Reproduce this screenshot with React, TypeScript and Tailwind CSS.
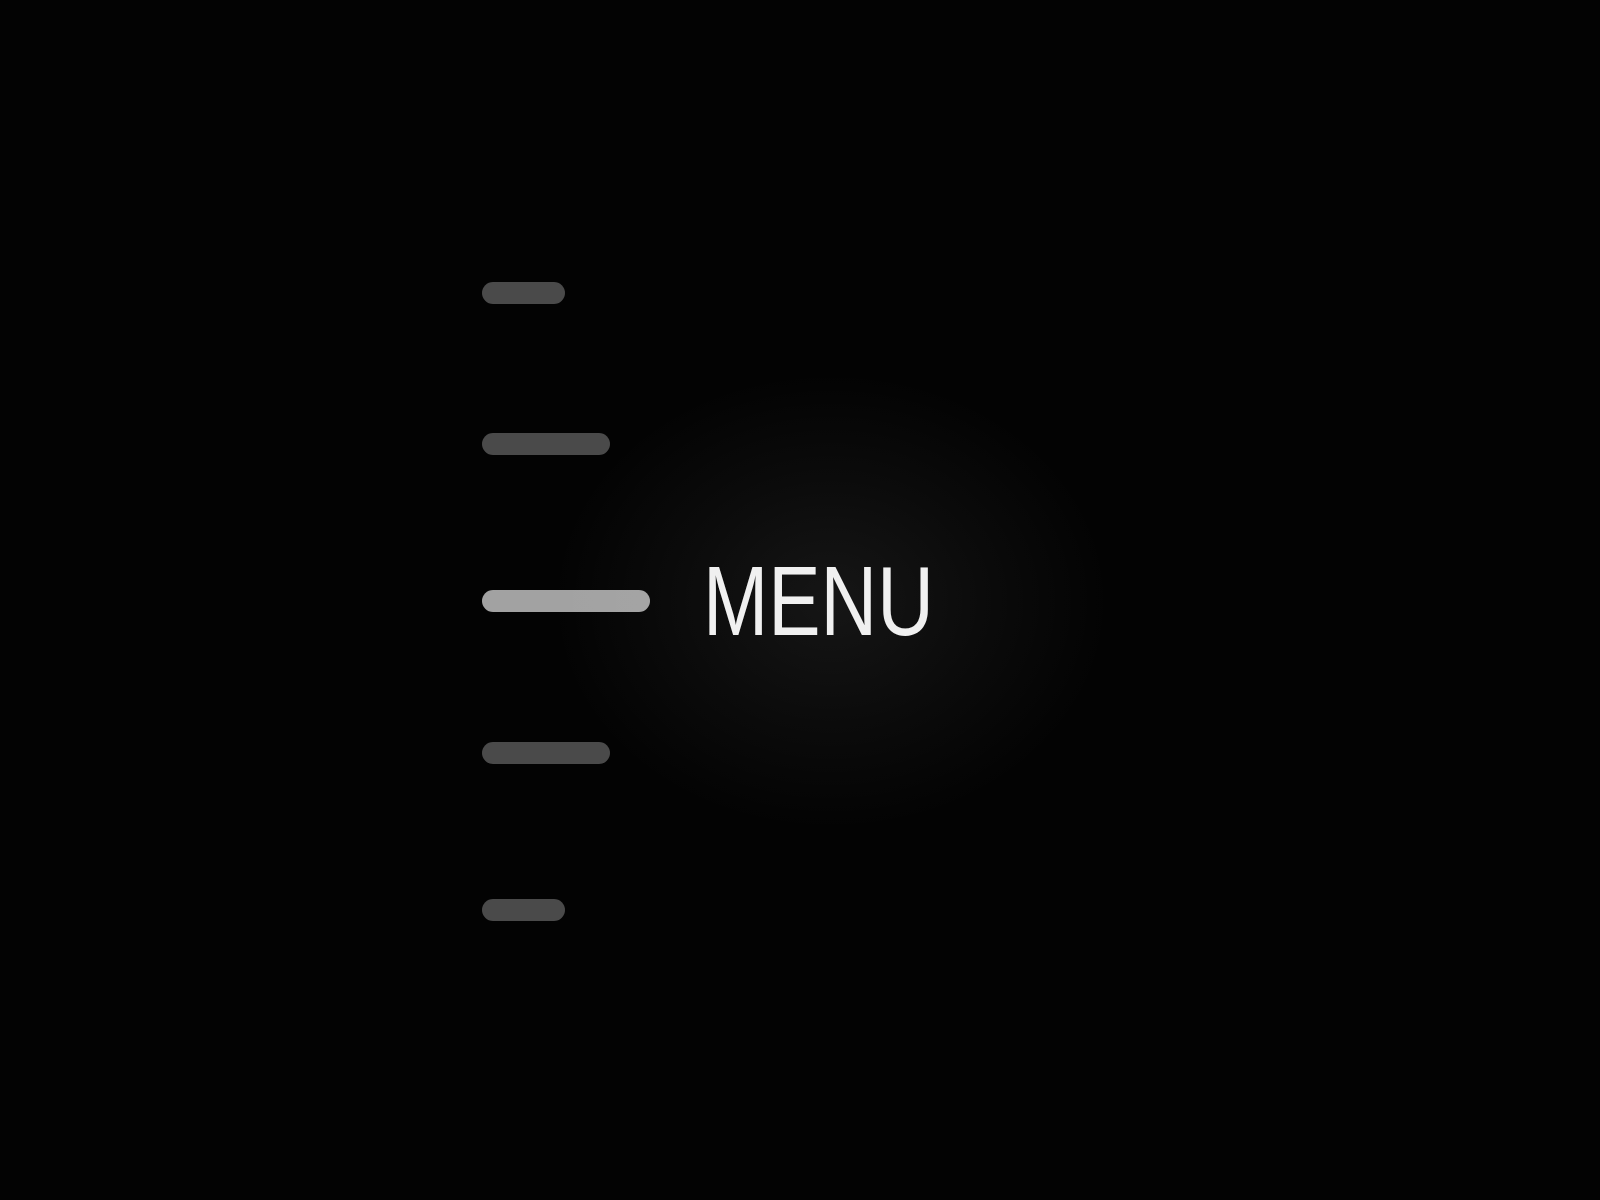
import React from "react";

function Bar({ w, active }: { w: string; active?: boolean }) {
  return (
    <div
      className={`${w} h-[22px] rounded-full ${active ? "bg-[#a2a2a2]" : "bg-[#4a4a4a]"}`}
    />
  );
}

export default function App() {
  return (
    <div className="w-full h-[1200px] bg-[#030303] overflow-hidden relative">
      <nav className="flex flex-col pl-[482px] pt-[282px]">
        <Bar w="w-[83px]" />
        <div className="mt-[129px]">
          <Bar w="w-[128px]" />
        </div>
        <div className="mt-[135px] h-[22px] flex items-center">
          <Bar w="w-[168px]" active />
          <div className="relative ml-[53px] h-[22px] flex items-center">
            <div className="absolute left-[128px] top-[11px] w-[560px] h-[460px] -translate-x-1/2 -translate-y-1/2 bg-[radial-gradient(closest-side,rgba(255,255,255,0.075),rgba(255,255,255,0.03)_55%,transparent)] pointer-events-none" />
            <span
              className="relative block text-[98px] leading-none text-[#f0f0f0] origin-left scale-x-[0.8] whitespace-nowrap"
              style={{ fontFamily: '"Liberation Sans", Arial, sans-serif' }}
            >
              MENU
            </span>
          </div>
        </div>
        <div className="mt-[130px]">
          <Bar w="w-[128px]" />
        </div>
        <div className="mt-[135px]">
          <Bar w="w-[83px]" />
        </div>
      </nav>
    </div>
  );
}
